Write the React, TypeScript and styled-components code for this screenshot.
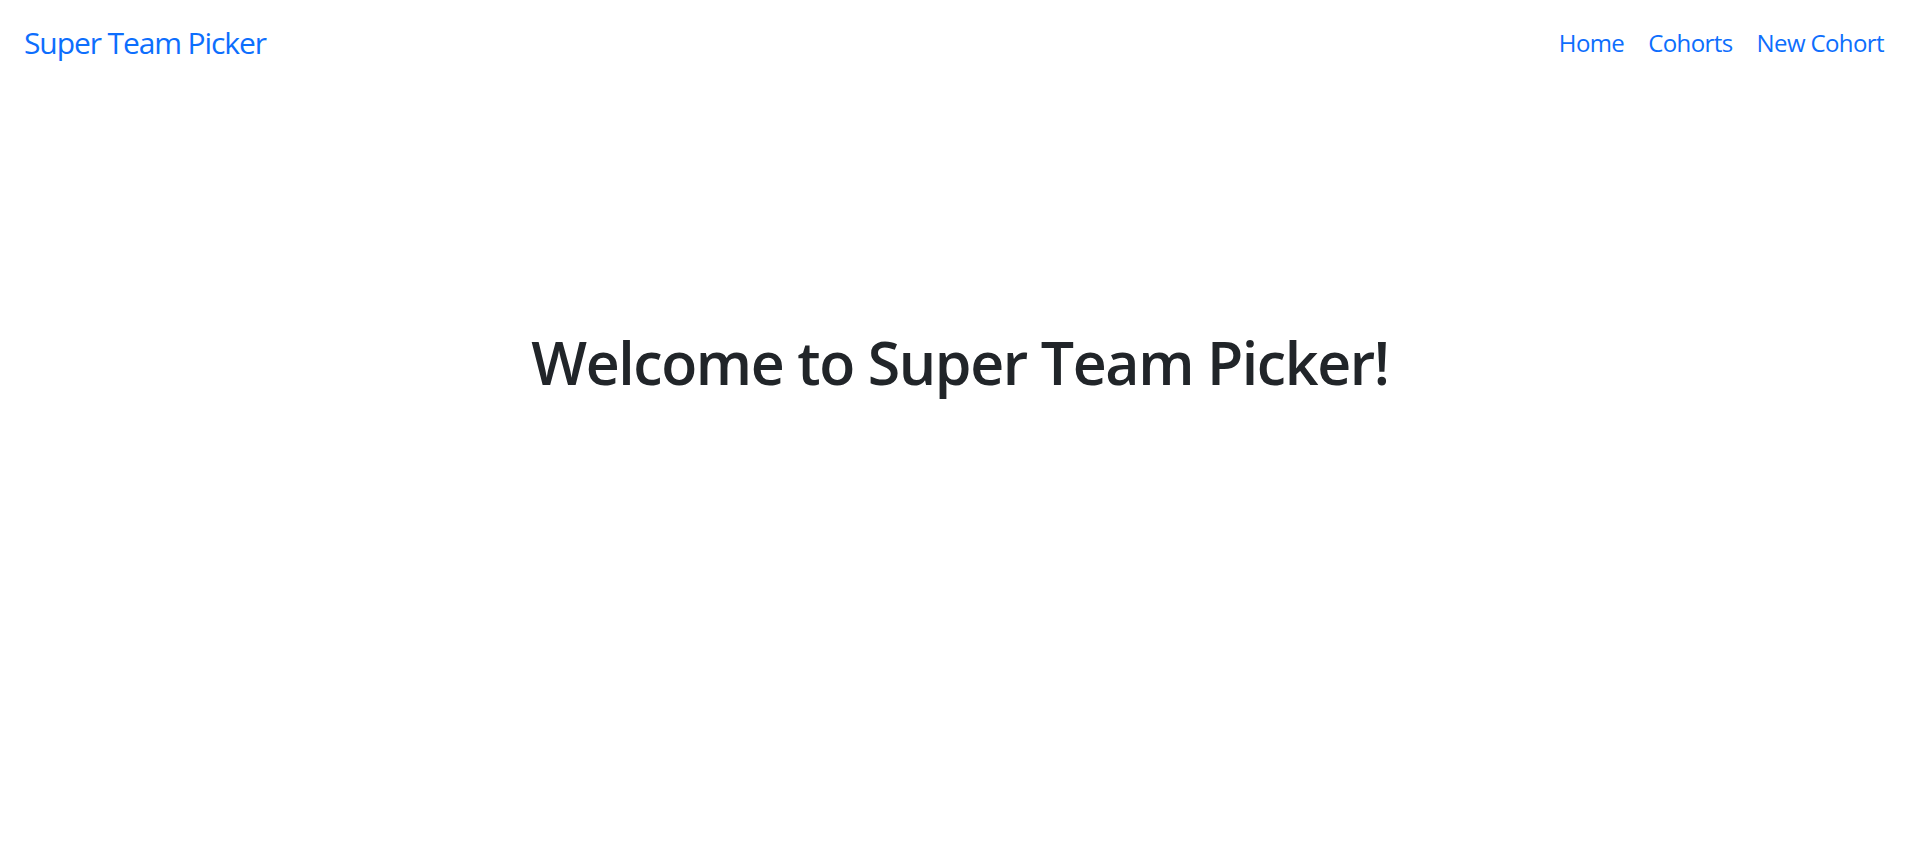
import React from "react";
import styled, { createGlobalStyle } from "styled-components";

const GlobalStyle = createGlobalStyle`
  html, body {
    margin: 0;
    padding: 0;
    background: #ffffff;
  }
  body {
    font-family: "Open Sans", "Noto Sans", sans-serif;
    color: #212529;
  }
`;

const Page = styled.div`
  min-height: 865px;
  display: flex;
  flex-direction: column;
`;

const Navbar = styled.nav`
  display: flex;
  align-items: center;
  justify-content: space-between;
  padding: 12px 24px;
`;

const Brand = styled.a`
  color: #0d6efd;
  font-size: 30px;
  line-height: 45px;
  letter-spacing: -1.1px;
  padding: 7.5px 0;
  text-decoration: none;
  cursor: pointer;
`;

const NavList = styled.div`
  display: flex;
  align-items: center;
`;

const NavLink = styled.a`
  color: #0d6efd;
  font-size: 24px;
  line-height: 36px;
  letter-spacing: -0.6px;
  padding: 13px 12px 11px;
  text-decoration: none;
  cursor: pointer;
`;

const Main = styled.main`
  display: flex;
  justify-content: center;
  padding-top: 242px;
`;

const Heading = styled.h1`
  margin: 0;
  font-size: 59px;
  line-height: 72px;
  font-weight: 600;
  letter-spacing: -1.4px;
  color: #212529;
`;

export default function App() {
  return (
    <Page>
      <GlobalStyle />
      <Navbar>
        <Brand>Super Team Picker</Brand>
        <NavList>
          <NavLink>Home</NavLink>
          <NavLink>Cohorts</NavLink>
          <NavLink>New Cohort</NavLink>
        </NavList>
      </Navbar>
      <Main>
        <Heading>Welcome to Super Team Picker!</Heading>
      </Main>
    </Page>
  );
}
